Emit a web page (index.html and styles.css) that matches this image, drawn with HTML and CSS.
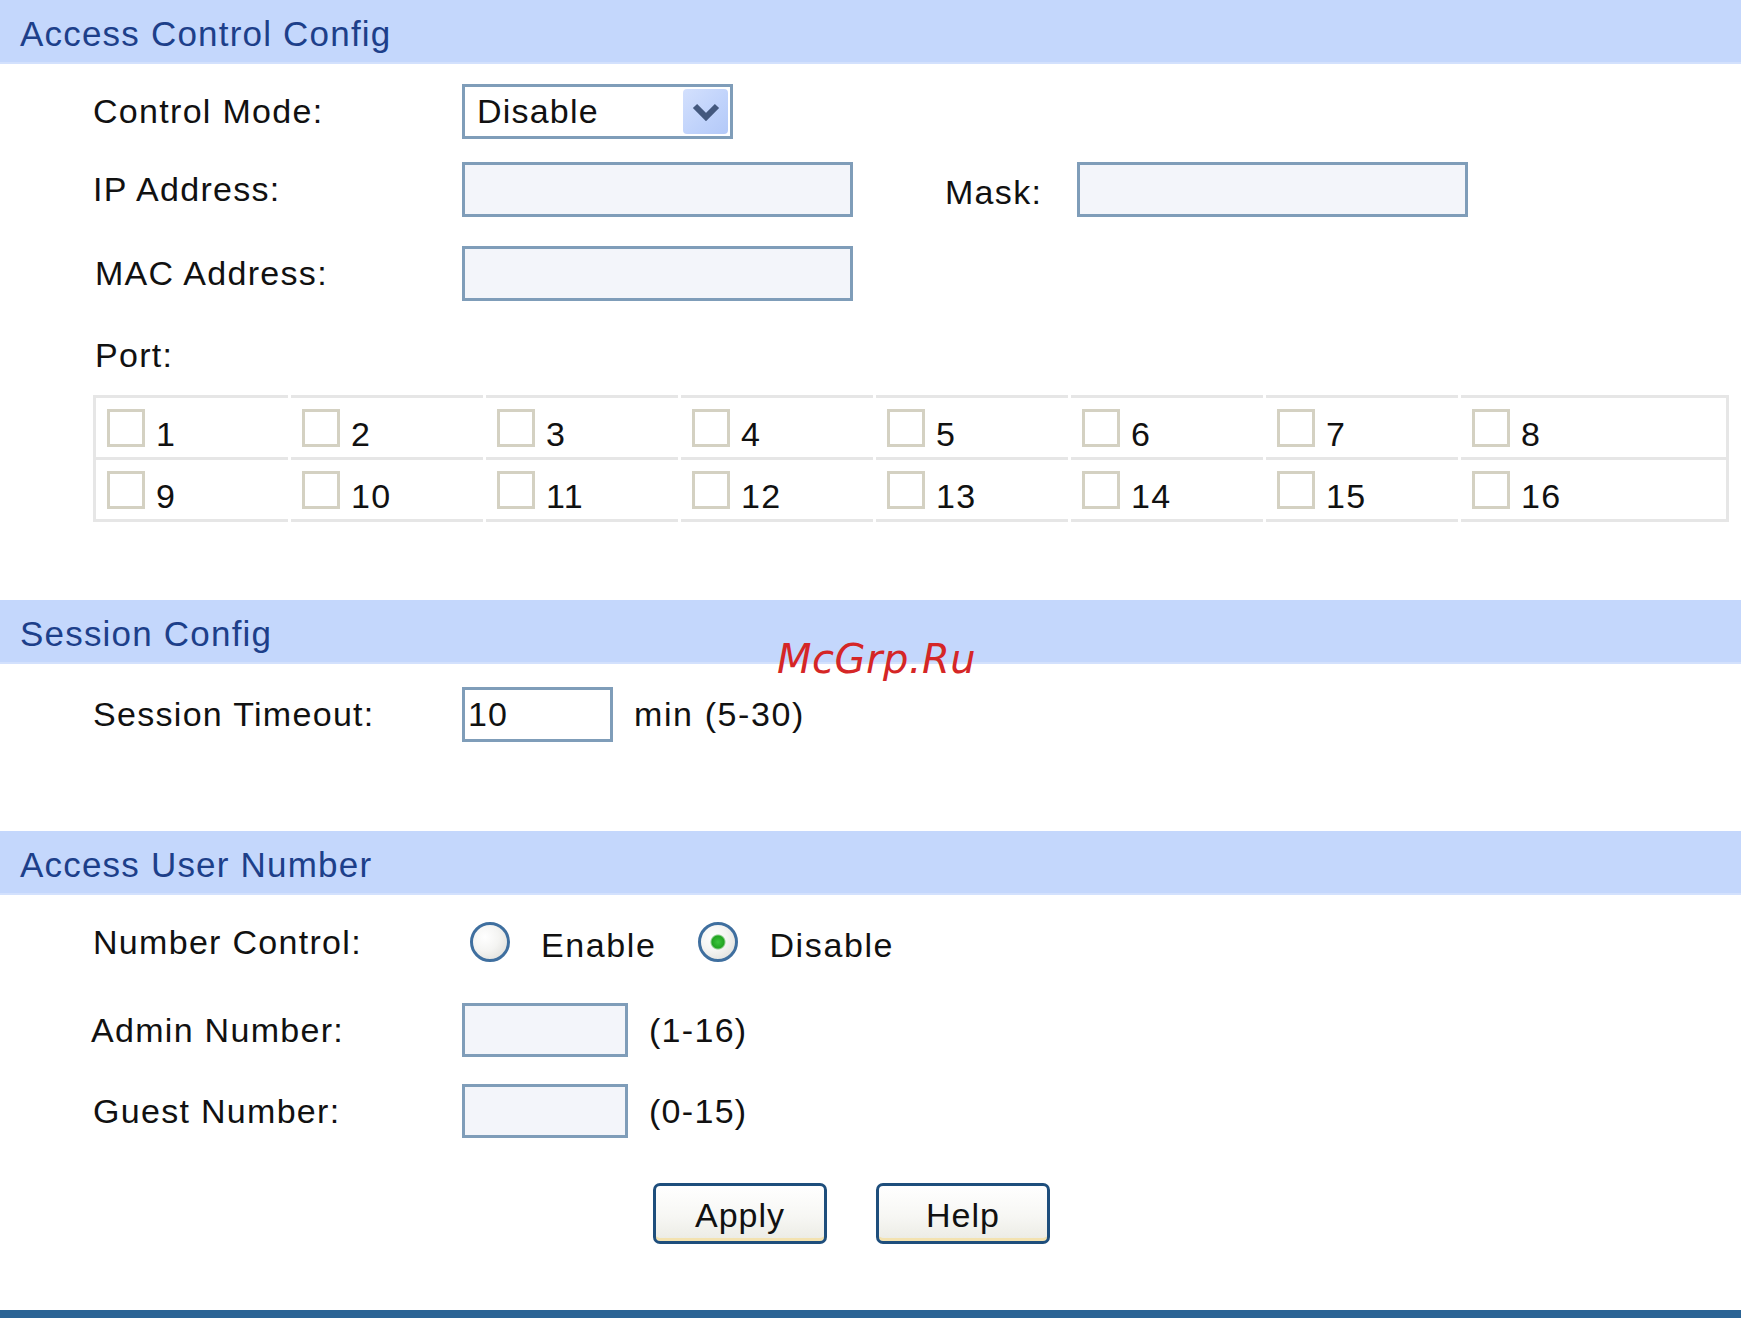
FILE: index.html
```html
<!DOCTYPE html>
<html lang="en">
<head>
<meta charset="utf-8">
<title>Access Control Config</title>
<link rel="stylesheet" href="styles.css">
</head>
<body>
<div class="page">
  <section class="panel">
    <h2 class="panel-title">Access Control Config</h2>
    <div class="panel-body body-acl">
      <div class="row row-mode">
        <span class="label">Control Mode:</span>
        <div class="select">
          <span class="select-value">Disable</span>
          <span class="select-btn">
            <svg width="28" height="18" viewBox="0 0 28 18"><polyline points="3,3 14,14 25,3" fill="none" stroke="#43587e" stroke-width="6" stroke-linejoin="miter"/></svg>
          </span>
        </div>
      </div>
      <div class="row row-ip">
        <span class="label">IP Address:</span>
        <input class="field field-wide" type="text">
        <span class="label-mask">Mask:</span>
        <input class="field field-wide" type="text">
      </div>
      <div class="row row-mac">
        <span class="label label-mac">MAC Address:</span>
        <input class="field field-wide" type="text">
      </div>
      <div class="row row-port">
        <span class="label label-mac">Port:</span>
      </div>
      <div class="ports">
        <label class="port"><input type="checkbox" class="check"><span class="port-num">1</span></label>
        <label class="port"><input type="checkbox" class="check"><span class="port-num">2</span></label>
        <label class="port"><input type="checkbox" class="check"><span class="port-num">3</span></label>
        <label class="port"><input type="checkbox" class="check"><span class="port-num">4</span></label>
        <label class="port"><input type="checkbox" class="check"><span class="port-num">5</span></label>
        <label class="port"><input type="checkbox" class="check"><span class="port-num">6</span></label>
        <label class="port"><input type="checkbox" class="check"><span class="port-num">7</span></label>
        <label class="port"><input type="checkbox" class="check"><span class="port-num">8</span></label>
        <label class="port"><input type="checkbox" class="check"><span class="port-num">9</span></label>
        <label class="port"><input type="checkbox" class="check"><span class="port-num">10</span></label>
        <label class="port"><input type="checkbox" class="check"><span class="port-num">11</span></label>
        <label class="port"><input type="checkbox" class="check"><span class="port-num">12</span></label>
        <label class="port"><input type="checkbox" class="check"><span class="port-num">13</span></label>
        <label class="port"><input type="checkbox" class="check"><span class="port-num">14</span></label>
        <label class="port"><input type="checkbox" class="check"><span class="port-num">15</span></label>
        <label class="port"><input type="checkbox" class="check"><span class="port-num">16</span></label>
      </div>
    </div>
  </section>

  <section class="panel">
    <h2 class="panel-title">Session Config</h2>
    <div class="panel-body body-session">
      <div class="row row-timeout">
        <span class="label">Session Timeout:</span>
        <input class="field field-timeout" type="text" value="10">
        <span class="hint">min (5-30)</span>
      </div>
    </div>
  </section>

  <section class="panel">
    <h2 class="panel-title">Access User Number</h2>
    <div class="panel-body body-users">
      <div class="row row-number">
        <span class="label">Number Control:</span>
        <label class="radio-opt"><input type="radio" name="nc" class="radio"><span class="radio-text">Enable</span></label>
        <label class="radio-opt"><input type="radio" name="nc" class="radio" checked><span class="radio-text">Disable</span></label>
      </div>
      <div class="row row-admin">
        <span class="label label-admin">Admin Number:</span>
        <input class="field field-small" type="text">
        <span class="hint">(1-16)</span>
      </div>
      <div class="row row-guest">
        <span class="label">Guest Number:</span>
        <input class="field field-small" type="text">
        <span class="hint">(0-15)</span>
      </div>
      <div class="actions">
        <button class="btn" type="button">Apply</button>
        <button class="btn" type="button">Help</button>
      </div>
    </div>
  </section>

  <div class="footer-bar"></div>
  <div class="watermark">McGrp.Ru</div>
</div>
</body>
</html>
```

FILE: styles.css
```css
html, body {
  margin: 0;
  padding: 0;
  background: #ffffff;
}

body {
  font-family: "Liberation Sans", Arial, sans-serif;
  font-size: 34px;
  letter-spacing: 1.3px;
  color: #111111;
}

.page {
  position: relative;
  width: 1741px;
  height: 1318px;
  overflow: hidden;
}

.panel-title {
  margin: 0;
  height: 64px;
  padding-left: 20px;
  padding-top: 3px;
  box-sizing: border-box;
  display: flex;
  align-items: center;
  background: #c4d7fc;
  box-shadow: inset 0 -2px 0 #d3e1fd;
  color: #1d3f8a;
  font-size: 35px;
  font-weight: normal;
  letter-spacing: 1.2px;
}

.panel-body {
  padding-left: 93px;
}

.body-acl { padding-bottom: 78px; }
.body-session { padding-bottom: 89px; }

.row {
  display: flex;
  align-items: center;
}

.label {
  width: 369px;
  flex: none;
  white-space: nowrap;
}

.label-mac { margin-left: 2px; width: 367px; }
.label-admin { margin-left: -2px; width: 371px; }

.row-mode { margin-top: 20px; height: 55px; }
.row-ip { margin-top: 23px; height: 55px; }
.row-mac { margin-top: 29px; height: 54px; }
.row-port { margin-top: 30px; height: 50px; }

/* select */
.select {
  box-sizing: border-box;
  width: 271px;
  height: 55px;
  border: 3px solid #7f9db9;
  background: #ffffff;
  display: flex;
  align-items: center;
  justify-content: space-between;
  padding: 0 2px 0 12px;
}

.select-value { letter-spacing: 1.2px; }

.select-btn {
  width: 45px;
  height: 45px;
  border-radius: 4px;
  background: linear-gradient(135deg, #d3e0fd 0%, #bfd2fb 60%, #b4c9f8 100%);
  display: flex;
  align-items: center;
  justify-content: center;
}

/* inputs */
.field {
  box-sizing: border-box;
  margin: 0;
  height: 55px;
  border: 3px solid #7f9db9;
  background: #f3f5fa;
  font-family: inherit;
  font-size: 34px;
  letter-spacing: 1px;
  color: #111111;
  padding: 0 3px;
  outline: none;
}

.field-wide { width: 391px; }

.label-mask {
  margin-left: 92px;
  width: 132px;
  flex: none;
  padding-top: 6px;
}

.row-timeout { margin-top: 23px; height: 55px; }
.field-timeout { width: 151px; background: #ffffff; }

.hint {
  margin-left: 21px;
  white-space: nowrap;
}

.row-timeout .hint { letter-spacing: 1.6px; }

/* ports */
.ports {
  margin-top: 15px;
  width: 1636px;
  box-sizing: border-box;
  border-left: 3px solid #e6e6e6;
  border-right: 3px solid #e6e6e6;
  display: grid;
  grid-template-columns: repeat(7, 192px) 1fr;
  column-gap: 3px;
}

.port {
  display: flex;
  align-items: flex-end;
  height: 59px;
  box-sizing: content-box;
  border-bottom: 3px solid #e6e6e6;
  padding-left: 11px;
}

.port:nth-child(-n+8) {
  border-top: 3px solid #e6e6e6;
}

.check {
  appearance: none;
  -webkit-appearance: none;
  box-sizing: border-box;
  width: 38px;
  height: 38px;
  margin: 0 0 10px 0;
  border: 3px solid #d4d1c2;
  background: #ffffff;
  flex: none;
}

.port-num {
  margin-left: 11px;
  line-height: 34px;
  margin-bottom: 6px;
}

/* radios */
.row-number { margin-top: 27px; height: 40px; }

.radio-opt {
  display: flex;
  align-items: center;
  margin-left: 8px;
  margin-right: 42px;
}

.radio-opt + .radio-opt { margin-left: 0; }

.radio {
  appearance: none;
  -webkit-appearance: none;
  box-sizing: border-box;
  width: 40px;
  height: 40px;
  margin: 0;
  border-radius: 50%;
  border: 3px solid #3f6f9f;
  background: radial-gradient(circle at 35% 35%, #ffffff 0%, #f4f4f2 45%, #d9d9d4 100%);
  flex: none;
}

.radio:checked {
  background:
    radial-gradient(circle at 50% 50%, #3cc43c 0, #21a421 6px, rgba(33,164,33,0) 8px),
    radial-gradient(circle at 35% 35%, #ffffff 0%, #f4f4f2 45%, #d9d9d4 100%);
}

.radio-text {
  margin-left: 31px;
  padding-top: 6px;
  letter-spacing: 1.6px;
}

.row-admin { margin-top: 41px; height: 54px; }
.row-guest { margin-top: 27px; height: 54px; }
.field-small { width: 166px; height: 54px; }

/* buttons */
.actions {
  margin-top: 45px;
  padding-left: 560px;
  display: flex;
  gap: 49px;
}

.btn {
  box-sizing: border-box;
  width: 174px;
  height: 61px;
  border: 3px solid #1e4e7c;
  border-radius: 7px;
  background: linear-gradient(180deg, #ffffff 0%, #f7f7f4 55%, #ebebe4 100%);
  box-shadow: inset 0 -4px 0 -1px #f3e2b0;
  font-family: inherit;
  font-size: 34px;
  letter-spacing: 1px;
  color: #111111;
  padding: 4px 0 0 0;
}

.footer-bar {
  margin-top: 66px;
  height: 8px;
  background: #2b6495;
}

.watermark {
  position: absolute;
  left: 777px;
  top: 639px;
  font-family: "DejaVu Sans", sans-serif;
  font-style: italic;
  font-size: 40px;
  line-height: 40px;
  letter-spacing: 0.5px;
  color: #d52626;
}
```
